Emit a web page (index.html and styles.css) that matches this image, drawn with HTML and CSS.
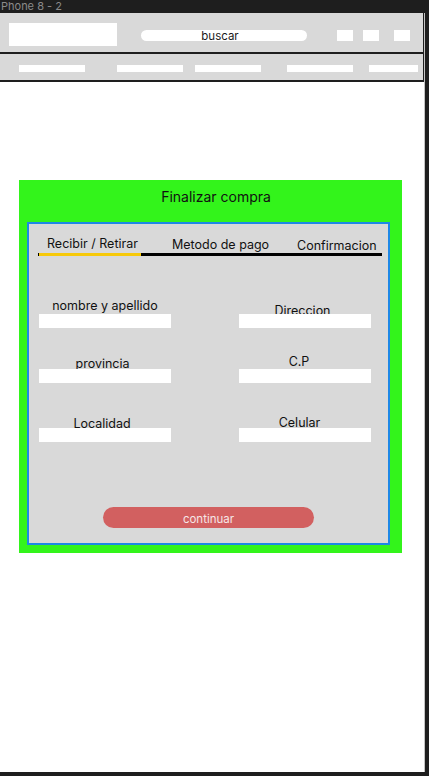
FILE: index.html
```html
<!DOCTYPE html>
<html lang="es">
<head>
<meta charset="utf-8">
<title>Phone 8 - 2</title>
<link rel="stylesheet" href="styles.css">
</head>
<body>
<div class="frame-label">Phone 8 - 2</div>
<div class="frame">
  <header class="topbar">
    <div class="logo"></div>
    <div class="search">buscar</div>
    <div class="icon icon-1"></div>
    <div class="icon icon-2"></div>
    <div class="icon icon-3"></div>
  </header>
  <nav class="navbar">
    <div class="nav-item nav-1"></div>
    <div class="nav-item nav-2"></div>
    <div class="nav-item nav-3"></div>
    <div class="nav-item nav-4"></div>
    <div class="nav-item nav-5"></div>
  </nav>
  <section class="checkout">
    <h1 class="checkout-title">Finalizar compra</h1>
    <div class="panel">
      <div class="tabs">
        <span class="tab tab-1">Recibir / Retirar</span>
        <span class="tab tab-2">Metodo de pago</span>
        <span class="tab tab-3">Confirmacion</span>
      </div>
      <div class="progress"><div class="progress-done"></div></div>
      <div class="fields">
        <div class="field"><span class="label l-nombre">nombre y apellido</span><div class="input"></div></div>
        <div class="field"><span class="label l-direccion">Direccion</span><div class="input"></div></div>
        <div class="field"><span class="label l-provincia">provincia</span><div class="input"></div></div>
        <div class="field"><span class="label l-cp">C.P</span><div class="input"></div></div>
        <div class="field"><span class="label l-localidad">Localidad</span><div class="input"></div></div>
        <div class="field"><span class="label l-celular">Celular</span><div class="input"></div></div>
      </div>
      <div class="button">continuar</div>
    </div>
  </section>
</div>
</body>
</html>
```
FILE: styles.css
```css
* { box-sizing: border-box; }
html, body { margin: 0; padding: 0; }
body {
  background: #1e1e1e;
  font-family: Inter, "Noto Sans", sans-serif;
  width: 429px;
  height: 776px;
  overflow: hidden;
}
.frame-label {
  height: 13px;
  font-size: 11px;
  line-height: 12px;
  color: #8a8a8a;
  padding-left: 1px;
}
.frame {
  width: 425px;
  height: 759px;
  background: #ffffff;
  border-right: 1px solid #c4c4c4;
}
.topbar {
  display: flex;
  align-items: flex-start;
  height: 41px;
  padding-left: 9px;
  background: #d9d9d9;
  border-bottom: 2px solid #1e1e1e;
  border-right: 1px solid #1e1e1e;
}
.logo {
  width: 108px;
  height: 23px;
  margin-top: 10px;
  background: #ffffff;
}
.search {
  width: 166px;
  height: 11px;
  margin-top: 17px;
  margin-left: 24px;
  border-radius: 6px;
  background: #ffffff;
  font-size: 11.5px;
  line-height: 11px;
  text-align: center;
  padding-right: 8px;
  padding-top: 1px;
  color: #1a1a1a;
}
.icon {
  width: 16px;
  height: 11px;
  margin-top: 17px;
  background: #ffffff;
}
.icon-1 { margin-left: 30px; }
.icon-2 { margin-left: 10px; }
.icon-3 { margin-left: 15px; }
.navbar {
  display: flex;
  align-items: flex-start;
  height: 28px;
  padding-left: 19px;
  background: #d9d9d9;
  border-bottom: 2px solid #1e1e1e;
  border-right: 1px solid #1e1e1e;
}
.nav-item {
  width: 66px;
  height: 7px;
  margin-top: 11px;
  background: #ffffff;
}
.nav-2 { margin-left: 32px; }
.nav-3 { margin-left: 12px; }
.nav-4 { margin-left: 26px; }
.nav-5 { margin-left: 16px; width: 49px; }
.checkout {
  width: 383px;
  height: 373px;
  margin-top: 98px;
  margin-left: 19px;
  padding-top: 8px;
  padding-left: 8px;
  background: #33f41b;
}
.checkout-title {
  margin: 0 0 16px 0;
  height: 18px;
  font-size: 14px;
  font-weight: 400;
  line-height: 18px;
  text-align: center;
  padding-left: 3px;
  color: #111111;
}
.panel {
  width: 363px;
  height: 323px;
  border: 2px solid #1e88e5;
  background: #d9d9d9;
}
.tabs {
  display: flex;
  align-items: flex-start;
  height: 29px;
  padding-top: 12px;
  padding-left: 18px;
  font-size: 12.5px;
  line-height: 16px;
  color: #111111;
}
.tab { white-space: nowrap; }
.tab-1 { width: 125px; }
.tab-2 { width: 125px; margin-top: 1px; }
.tab-3 { margin-top: 2px; }
.progress {
  width: 344px;
  height: 3px;
  margin-left: 9px;
  padding-left: 1px;
  background: #000000;
}
.progress-done {
  width: 102px;
  height: 3px;
  background: #f7c90a;
}
.fields {
  display: grid;
  grid-template-columns: 132px 132px;
  grid-template-rows: 72px 55px 59px;
  column-gap: 68px;
  margin-left: 10px;
}
.field {
  display: flex;
  flex-direction: column;
  justify-content: flex-end;
  align-items: center;
}
.label {
  font-size: 12.5px;
  line-height: 16px;
  color: #111111;
  white-space: nowrap;
}
.input {
  width: 132px;
  height: 14px;
  background: #ffffff;
}
.l-nombre { margin-bottom: 0; }
.l-direccion { margin-bottom: -5px; margin-right: 5px; }
.l-provincia { margin-bottom: -3px; margin-right: 5px; }
.l-cp { margin-bottom: -1px; margin-right: 12px; }
.l-localidad { margin-bottom: -4px; margin-right: 6px; }
.l-celular { margin-bottom: -3px; margin-right: 11px; }
.button {
  width: 211px;
  height: 21px;
  margin-top: 65px;
  margin-left: 74px;
  border-radius: 11px;
  background: #d26060;
  color: #f6e6e6;
  font-size: 11.5px;
  line-height: 21px;
  padding-top: 2px;
  text-align: center;
}
```
